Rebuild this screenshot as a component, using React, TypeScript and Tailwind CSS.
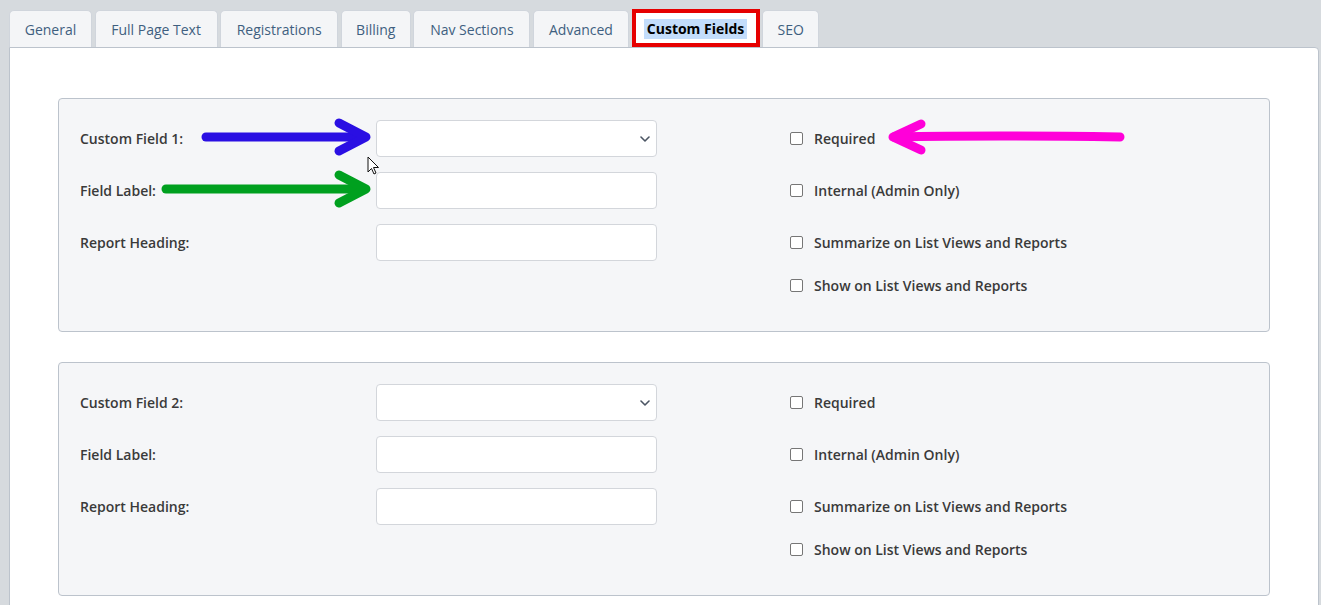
import React from "react";

const tabs = [
  { name: "General", w: "w-[83px]" },
  { name: "Full Page Text", w: "w-[123px]" },
  { name: "Registrations", w: "w-[118px]" },
  { name: "Billing", w: "w-[70px]" },
  { name: "Nav Sections", w: "w-[117px]" },
  { name: "Advanced", w: "w-[96px]" },
  { name: "Custom Fields", w: "w-[128px]", active: true },
  { name: "SEO", w: "w-[57px]" },
];

function Checkbox({ label, className = "" }: { label: string; className?: string }) {
  return (
    <label className={`flex items-center ${className}`}>
      <span className="w-[13px] h-[13px] rounded-[2px] border border-[#767676] bg-white shrink-0" />
      <span className="ml-[11px] text-[14px] font-semibold text-[#3a3a3a]">{label}</span>
    </label>
  );
}

function Card({ n }: { n: number }) {
  return (
    <div className="bg-[#f5f6f8] border border-[#bcc3cc] rounded-[4px] pl-[21px] pt-[21px] pb-[36px] flex">
      <div className="flex flex-col gap-[15px]">
        {[`Custom Field ${n}:`, "Field Label:", "Report Heading:"].map((l, i) => (
          <div key={l} className="flex items-center h-[37px]">
            <div className="w-[296px] text-[14px] font-semibold text-[#3a3a3a]">{l}</div>
            <div className="w-[281px] h-[37px] bg-white border border-[#d3d6db] rounded-[4px] flex items-center justify-end pr-[6px]">
              {i === 0 && (
                <svg width="10" height="6" viewBox="0 0 10 6" fill="none">
                  <path d="M1 1l4 4 4-4" stroke="#4b5563" strokeWidth="1.6" strokeLinecap="round" strokeLinejoin="round" />
                </svg>
              )}
            </div>
          </div>
        ))}
      </div>
      <div className="ml-[133px] flex flex-col">
        <Checkbox label="Required" className="h-[37px]" />
        <Checkbox label="Internal (Admin Only)" className="h-[37px] mt-[15px]" />
        <Checkbox label="Summarize on List Views and Reports" className="h-[37px] mt-[15px]" />
        <Checkbox label="Show on List Views and Reports" className="h-[20px] mt-[14px]" />
      </div>
    </div>
  );
}

export default function App() {
  return (
    <div
      className="relative min-h-[605px] bg-[#d6dade] pt-[10px] pl-[9px] pr-[2px] overflow-hidden"
      style={{ fontFamily: '"Open Sans", "Noto Sans", sans-serif' }}
    >
      <div className="flex gap-[2.6px] h-[37px]">
        {tabs.map((t) =>
          t.active ? (
            <div
              key={t.name}
              className={`${t.w} h-[38px] -mt-[1px] bg-white border-[4px] border-[#e60000] flex items-center justify-center relative z-10`}
            >
              <span className="mt-[2px] bg-[#c3ddfb] px-[3px] py-[1px] text-[14px] font-bold text-black leading-[18px]">
                {t.name}
              </span>
            </div>
          ) : (
            <div
              key={t.name}
              className={`${t.w} h-[37px] bg-[#f4f5f7] border border-b-0 border-[#d0d5dc] rounded-t-[5px] flex items-center justify-center text-[14px] text-[#3f5f80]`}
            >
              {t.name}
            </div>
          )
        )}
      </div>
      <div className="bg-white border border-[#bcc3cc] rounded-tr-[4px] pl-[48px] pr-[48px] pt-[50px] pb-[40px] flex flex-col gap-[30px]">
        <Card n={1} />
        <Card n={2} />
      </div>

      {/* annotations */}
      <svg className="absolute left-0 top-0 pointer-events-none" width="1321" height="605" viewBox="0 0 1321 605">
        <g fill="none" strokeLinecap="round" strokeLinejoin="round" strokeWidth="9">
          <path d="M206 137 L364 137" stroke="#2a0fe3" />
          <path d="M339 123 L366 137 L339 151" stroke="#2a0fe3" />
          <path d="M166 189 L364 189" stroke="#00a01f" />
          <path d="M339 175 L366 189 L339 203" stroke="#00a01f" />
          <path d="M1120 137 C1050 136 950 136 894 137" stroke="#ff00d9" />
          <path d="M921 124 L893 137 L921 150" stroke="#ff00d9" />
        </g>
        <path
          d="M368 157 L368 172 L371.5 168.5 L374 174 L376 173 L373.5 167.5 L378.5 167.5 Z"
          fill="white"
          stroke="#111"
          strokeWidth="1"
          strokeLinejoin="round"
        />
      </svg>
    </div>
  );
}
